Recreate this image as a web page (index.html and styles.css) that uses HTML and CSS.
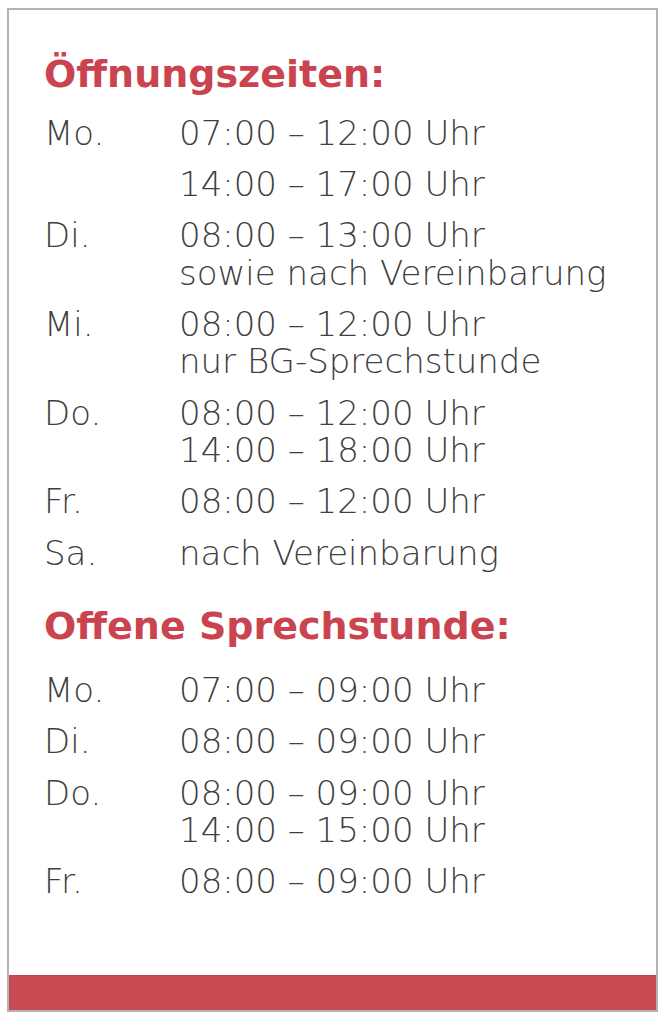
FILE: index.html
```html
<!DOCTYPE html>
<html lang="de">
<head>
<meta charset="utf-8">
<link rel="stylesheet" href="styles.css">
</head>
<body>
<div class="card">
  <div class="content">
    <h2 class="title">Öffnungszeiten:</h2>
    <div class="table">
      <div class="day">Mo.</div><div class="times">07:00 – 12:00 Uhr</div>
      <div class="day"></div><div class="times">14:00 – 17:00 Uhr</div>
      <div class="day">Di.</div><div class="times">08:00 – 13:00 Uhr<br>sowie nach Vereinbarung</div>
      <div class="day">Mi.</div><div class="times">08:00 – 12:00 Uhr<br>nur BG-Sprechstunde</div>
      <div class="day">Do.</div><div class="times">08:00 – 12:00 Uhr<br>14:00 – 18:00 Uhr</div>
      <div class="day">Fr.</div><div class="times">08:00 – 12:00 Uhr</div>
      <div class="day">Sa.</div><div class="times">nach Vereinbarung</div>
    </div>
    <h2 class="title second">Offene Sprechstunde:</h2>
    <div class="table table-second">
      <div class="day">Mo.</div><div class="times">07:00 – 09:00 Uhr</div>
      <div class="day">Di.</div><div class="times">08:00 – 09:00 Uhr</div>
      <div class="day">Do.</div><div class="times">08:00 – 09:00 Uhr<br>14:00 – 15:00 Uhr</div>
      <div class="day">Fr.</div><div class="times">08:00 – 09:00 Uhr</div>
    </div>
  </div>
  <div class="bar"></div>
</div>
</body>
</html>
```
FILE: styles.css
```css
html, body {
  margin: 0;
  padding: 0;
  background: #ffffff;
}
body {
  padding: 8px 0 0 7px;
}
.card {
  box-sizing: border-box;
  width: 651px;
  height: 1004px;
  border: 2px solid #b3b3b3;
  display: flex;
  flex-direction: column;
  background: #fff;
}
.content {
  flex: 1;
  padding: 42px 0 0 35px;
}
.title {
  margin: 0;
  font-family: "DejaVu Sans", "Liberation Sans", sans-serif;
  font-weight: 700;
  font-size: 38px;
  line-height: 44px;
  color: #c9444f;
}
.title.second {
  margin-top: 32px;
}
.table {
  margin-top: 18.5px;
  display: grid;
  grid-template-columns: 135px auto;
  row-gap: 13.75px;
  font-family: "DejaVu Sans", "Liberation Sans", sans-serif;
  font-weight: 200;
  font-size: 34px;
  line-height: 37.5px;
  color: #404040;
}
.table-second {
  margin-top: 24px;
}
.bar {
  height: 34px;
  background: #c84a52;
  border-top: 1px solid #b94750;
}
```
